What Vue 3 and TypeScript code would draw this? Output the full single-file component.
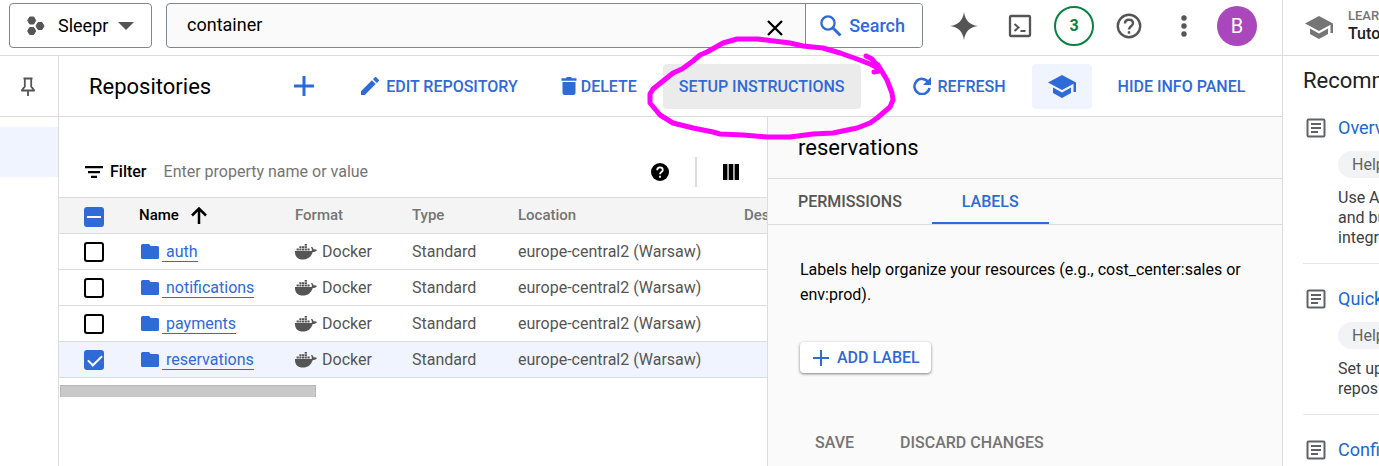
<script setup lang="ts">
import { ref } from 'vue'

interface Repository {
  name: string
  format: string
  type: string
  location: string
  selected: boolean
}

interface Guide {
  title: string
  lines: string[]
}

const query = ref('container')
const filter = ref('')

const repositories = ref<Repository[]>(
  ['auth', 'notifications', 'payments', 'reservations'].map((name) => ({
    name,
    format: 'Docker',
    type: 'Standard',
    location: 'europe-central2 (Warsaw)',
    selected: name === 'reservations',
  })),
)

const guides: Guide[] = [
  { title: 'Overview', lines: ['Use Artifact', 'and build', 'integrations'] },
  { title: 'Quickstart', lines: ['Set up', 'repositories'] },
  { title: 'Configure', lines: [] },
]
</script>

<template>
  <div class="page">
    <div class="console">
      <header class="topbar">
        <button class="project" type="button">
          <svg class="hexes" width="18" height="20" viewBox="0 0 18 20">
            <path d="M2.7 1h4l2 3.500-2 3.500h-4l-2-3.500zM11 6.500h4l2 3.500-2 3.500h-4L9 10zM2.700 11.500h4l2 3.500-2 3.500h-4l-2-3.500z" />
          </svg>
          <span>Sleepr</span>
          <svg width="16" height="8" viewBox="0 0 16 8"><path d="M0 0h16L8 8z" /></svg>
        </button>

        <form class="search" @submit.prevent>
          <input v-model="query" class="query" type="text" aria-label="Search" />
          <button class="clear" type="button" aria-label="Clear search" @click="query = ''">
            <svg width="16" height="16" viewBox="0 0 16 16"><path d="M1 1l14 14M15 1L1 15" fill="none" stroke="#000" stroke-width="2.300" /></svg>
          </button>
          <button class="go" type="submit">
            <svg width="22" height="22" viewBox="0 0 22 22" fill="none" stroke="#2f6ad9">
              <circle cx="8" cy="8" r="6.600" stroke-width="2.300" />
              <path d="M12.800 12.800l7.700 7.700" stroke-width="3" />
            </svg>
            Search
          </button>
        </form>

        <div class="tools">
          <button type="button" aria-label="Assistant">
            <svg width="28" height="28" viewBox="0 0 28 28"><path d="M14 0C15.200 8.500 19.500 12.800 28 14 19.500 15.200 15.200 19.500 14 28 12.800 19.500 8.500 15.200 0 14 8.500 12.800 12.800 8.500 14 0z" /></svg>
          </button>
          <button type="button" aria-label="Cloud Shell">
            <svg width="24" height="24" viewBox="0 0 24 24" fill="none" stroke="#555">
              <rect x="2" y="2" width="20" height="20" rx="1" stroke-width="2.300" />
              <path d="M6.500 10l4 3.500-4 3.500M12.500 17h5" stroke-width="2" />
            </svg>
          </button>
          <button class="count" type="button" aria-label="Notifications">3</button>
          <button type="button" aria-label="Help">
            <svg width="26" height="26" viewBox="0 0 26 26" fill="none" stroke="#555" stroke-width="2.400">
              <circle cx="13" cy="13" r="11.200" />
              <path d="M9 10.500C9 8 10.700 6.700 13 6.700s4 1.400 4 3.500c0 3-4 3.100-4 6.200" />
              <path d="M13 18.200v2.500" />
            </svg>
          </button>
          <button type="button" aria-label="More">
            <svg width="6" height="22" viewBox="0 0 6 22"><circle cx="3" cy="3" r="2.700" /><circle cx="3" cy="11" r="2.700" /><circle cx="3" cy="19" r="2.700" /></svg>
          </button>
          <button class="avatar" type="button" aria-label="Account">B</button>
        </div>
      </header>

      <div class="body">
        <nav class="rail">
          <button class="pin" type="button" aria-label="Pin">
            <svg width="16" height="20" viewBox="0 0 16 20" fill="none" stroke="#555" stroke-width="1.800">
              <path d="M3.500 1.500h9M4.800 1.500v8.200L2 13v.5h12V13l-2.800-3.300V1.500M8 13.500V19" />
            </svg>
          </button>
          <div class="current"></div>
        </nav>

        <div class="workspace">
          <div class="actions">
            <h1>Repositories</h1>
            <button class="create" type="button" aria-label="Create repository">
              <svg width="20" height="20" viewBox="0 0 20 20"><path d="M8.500 0h3v8.500H20v3h-8.500V20h-3v-8.500H0v-3h8.500z" /></svg>
            </button>
            <button class="edit" type="button">
              <svg width="18" height="18" viewBox="0 0 18 18"><path d="M0 14.200V18h3.800L14.700 7.100l-3.800-3.800zM17.700 4.100a1 1 0 000-1.400L15.300.300a1 1 0 00-1.400 0L12 2.200 15.800 6z" /></svg>
              EDIT REPOSITORY
            </button>
            <button class="delete" type="button">
              <svg width="16" height="18" viewBox="0 0 16 18"><path d="M1.500 5h13v11a2 2 0 01-2 2h-9a2 2 0 01-2-2zM.5 1.200h4.300L6 0h4l1.200 1.200h4.300v2.600H.5z" /></svg>
              DELETE
            </button>
            <button class="setup" type="button">SETUP INSTRUCTIONS</button>
            <button class="refresh" type="button">
              <svg width="18" height="18" viewBox="0 0 18 18">
                <path d="M15.200 5A7.600 7.600 0 1016.500 11" fill="none" stroke="#2f6ad9" stroke-width="2.500" />
                <path d="M18 0v8h-8z" />
              </svg>
              REFRESH
            </button>
            <button class="learn-toggle" type="button" aria-label="Learn">
              <svg width="28" height="23" viewBox="0 0 28 23"><path d="M14 0L0 7.500 14 15l11.500-6.200V17H28V7.500zM5 12.600v5.300l9 5.100 9-5.100v-5.300l-9 4.900z" /></svg>
            </button>
            <button class="hide" type="button">HIDE INFO PANEL</button>
          </div>

          <div class="panes">
            <main class="list">
              <div class="filter">
                <label for="filter">
                  <svg width="18" height="12" viewBox="0 0 18 12"><path d="M0 0h18v2.300H0zM3 4.900h12v2.300H3zM6 9.700h6V12H6z" /></svg>
                  <span>Filter</span>
                </label>
                <input id="filter" v-model="filter" type="text" placeholder="Enter property name or value" />
                <button type="button" aria-label="Filter help">
                  <svg width="18" height="18" viewBox="0 0 18 18">
                    <circle cx="9" cy="9" r="9" />
                    <path d="M6.200 7.200c0-1.700 1.200-2.800 2.800-2.800s2.800 1 2.800 2.500c0 2-2.800 2.200-2.800 4.400M9 12.800v2" fill="none" stroke="#fff" stroke-width="1.800" />
                  </svg>
                </button>
                <span class="divider"></span>
                <button type="button" aria-label="Columns">
                  <svg width="16" height="16" viewBox="0 0 16 16"><path d="M0 0h4.400v16H0zM5.700 0h4.600v16H5.700zM11.600 0H16v16h-4.400z" /></svg>
                </button>
              </div>

              <table>
                <colgroup>
                  <col class="c-check" /><col class="c-name" /><col class="c-format" /><col class="c-type" /><col class="c-location" /><col />
                </colgroup>
                <thead>
                  <tr>
                    <th class="pick"><input type="checkbox" aria-label="Select all" class="partial" :indeterminate="true" /></th>
                    <th class="sorted">
                      <span>Name
                        <svg width="16" height="17" viewBox="0 0 16 17"><path d="M8 17V2M1 8.500l7-7 7 7" fill="none" stroke="#000" stroke-width="2.500" /></svg>
                      </span>
                    </th>
                    <th>Format</th>
                    <th>Type</th>
                    <th>Location</th>
                    <th>Description</th>
                  </tr>
                </thead>
                <tbody>
                  <tr v-for="repo in repositories" :key="repo.name" :class="{ selected: repo.selected }">
                    <td class="pick"><input v-model="repo.selected" type="checkbox" :aria-label="'Select ' + repo.name" /></td>
                    <td>
                      <span class="cell">
                        <svg class="folder" width="18" height="15" viewBox="0 0 18 15"><path d="M1.500 0H8l1.500 2h7A1.500 1.500 0 0118 3.500v10a1.500 1.500 0 01-1.500 1.500h-15A1.500 1.500 0 010 13.500v-12A1.500 1.500 0 011.500 0z" /></svg>
                        <a href="#">{{ repo.name }}</a>
                      </span>
                    </td>
                    <td>
                      <span class="cell docker">
                        <svg width="22" height="16" viewBox="0 0 22 16">
                          <path d="M0 7h16.600c.5-1 .2-2.500-.6-3.400l.9-.8c1 .8 1.600 1.700 1.800 2.600 1.100-.2 2.300 0 3.300.5-.8 1.500-2.200 2.100-4.200 2.100C16 13 13 15.500 7.800 15.500 2.500 15.500-.3 12.300 0 7zM1.600 4.500h2.200v2H1.600zM4.300 4.500h2.200v2H4.300zM7 4.500h2.200v2H7zM9.700 4.500h2.200v2H9.700zM12.400 4.500h2.200v2h-2.200zM4.300 2.200h2.200v1.900H4.300zM7 2.200h2.200v1.900H7zM9.700 2.200h2.200v1.900H9.700zM9.700 0h2.200v1.800H9.700z" />
                        </svg>
                        {{ repo.format }}
                      </span>
                    </td>
                    <td>{{ repo.type }}</td>
                    <td>{{ repo.location }}</td>
                    <td></td>
                  </tr>
                </tbody>
              </table>
              <div class="scroll-thumb"></div>
            </main>

            <aside class="info">
              <h2>reservations</h2>
              <div class="tabs" role="tablist">
                <button type="button" role="tab" aria-selected="false">PERMISSIONS</button>
                <button type="button" role="tab" aria-selected="true" class="active">LABELS</button>
              </div>
              <div class="labels">
                <p>Labels help organize your resources (e.g., cost_center:sales or env:prod).</p>
                <button class="add" type="button">
                  <svg width="16" height="16" viewBox="0 0 16 16"><path d="M7 0h2v7h7v2H9v7H7V9H0V7h7z" /></svg>
                  ADD LABEL
                </button>
                <div class="form-actions">
                  <button type="button">SAVE</button>
                  <button type="button">DISCARD CHANGES</button>
                </div>
              </div>
            </aside>
          </div>
        </div>
      </div>
    </div>

    <aside class="learn">
      <header>
        <svg width="28" height="23" viewBox="0 0 28 23"><path d="M14 0L0 7.500 14 15l11.500-6.200V17H28V7.500zM5 12.600v5.300l9 5.100 9-5.100v-5.300l-9 4.900z" /></svg>
        <div>
          <div class="eyebrow">LEARN</div>
          <div class="heading">Tutorial</div>
        </div>
      </header>
      <h2>Recommended</h2>
      <article v-for="guide in guides" :key="guide.title">
        <svg width="20" height="20" viewBox="0 0 20 20" fill="none" stroke="#5f6368" stroke-width="2">
          <rect x="1.500" y="1.500" width="17" height="17" rx="1" />
          <path d="M5 6h10M5 10h10M5 14h7" />
        </svg>
        <div>
          <a href="#">{{ guide.title }}</a>
          <span class="chip">Help document</span>
          <p><span v-for="line in guide.lines" :key="line">{{ line }}</span></p>
        </div>
      </article>
    </aside>

    <svg class="marker" width="260" height="110" viewBox="640 34 260 110">
      <path d="M866 56L872 59 877 65 879 71 874 72M878 68L870 64 857 59 840 53 823 48 803 46 790 43 757 39 737 39 723 43 707 52 700 55 693 61 682 69 673 73 653 89 650 94 650 103 660 115 673 123 693 128 713 132 720 134 743 135 767 137 790 137 813 134 833 133 857 128 870 123 877 118 890 107 893 100 892 93 887 80 878 65" />
    </svg>
  </div>
</template>

<style>
body {
  margin: 0;
  overflow: hidden;
}
</style>

<style scoped>
.page {
  position: relative;
  display: flex;
  height: 100vh;
  overflow: hidden;
  background: #fff;
  color: #000;
  font-family: Roboto, "Liberation Sans", sans-serif;
  font-size: 16px;
}
.page * {
  box-sizing: border-box;
}
button,
input {
  margin: 0;
  padding: 0;
  border: 0;
  background: none;
  color: inherit;
  font: inherit;
}
button {
  display: flex;
  align-items: center;
  flex: none;
  white-space: nowrap;
}
svg {
  display: block;
  flex: none;
}
h1,
h2,
p {
  margin: 0;
  font-weight: 400;
}
a {
  text-decoration: none;
}
.console {
  display: flex;
  flex-direction: column;
  flex: 1;
  min-width: 0;
}

/* Top bar */
.topbar {
  display: flex;
  align-items: center;
  flex: none;
  height: 56px;
  padding: 0 25px 4px 9px;
  border-bottom: 1px solid #dadce0;
}
.project {
  width: 143px;
  height: 45px;
  padding: 0 17px;
  border: 1px solid #80868b;
  border-radius: 4px;
  font-size: 18px;
}
.project span {
  flex: 1;
  padding-left: 13px;
  text-align: left;
}
.project svg,
.tools svg {
  fill: #555;
}
.hexes path {
  stroke: #555;
  stroke-linejoin: round;
}
.tools svg[fill="none"] {
  fill: none;
}
.search {
  display: flex;
  flex: 1;
  height: 45px;
  margin-left: 14px;
  overflow: hidden;
  border: 1px solid #80868b;
  border-radius: 4px;
  background: #fafafa;
}
.query {
  flex: 1;
  min-width: 0;
  padding: 0 0 2px 20px;
  outline: 0;
  font-size: 18px;
}
.clear {
  padding: 4px 22px 0;
}
.go {
  gap: 7px;
  padding: 0 17px 0 14px;
  border-left: 1px solid #80868b;
  background: #fff;
  color: #2f6ad9;
  font-size: 18px;
  font-weight: 500;
}
.tools {
  display: flex;
  align-items: center;
  gap: 22px;
  margin-left: 27px;
}
.tools button:first-child {
  margin-right: 8px;
}
.tools button:nth-child(5) {
  margin: 0 8px 0 17px;
}
.count,
.avatar {
  justify-content: center;
  width: 40px;
  height: 40px;
  border-radius: 50%;
}
.count {
  border: 2px solid #0b8043;
  color: #0b8043;
  font-weight: 700;
}
.avatar {
  background: #ab47bc;
  color: #fff;
  font-size: 20px;
}

/* Side rail */
.body {
  display: flex;
  flex: 1;
  min-height: 0;
}
.rail {
  flex: none;
  width: 59px;
  border-right: 1px solid #dadce0;
}
.pin {
  justify-content: center;
  width: 100%;
  height: 61px;
  padding: 2px 2px 0 0;
  border-bottom: 1px solid #dadce0;
}
.current {
  height: 50px;
  margin-top: 10px;
  background: #f0f4fe;
}

/* Action bar */
.workspace {
  display: flex;
  flex-direction: column;
  flex: 1;
  min-width: 0;
}
.actions {
  display: flex;
  align-items: center;
  flex: none;
  height: 61px;
  padding-left: 30px;
  border-bottom: 1px solid #dadce0;
  color: #2f6ad9;
  font-weight: 500;
}
.actions svg,
.add svg {
  fill: #2f6ad9;
}
h1,
.info h2 {
  color: #000;
  font-size: 22px;
}
.create {
  margin-left: 83px;
}
.edit,
.refresh {
  gap: 7px;
}
.edit {
  margin-left: 47px;
}
.delete {
  gap: 4px;
  margin-left: 43px;
}
.setup {
  height: 45px;
  margin-left: 26px;
  padding: 0 16px;
  border-radius: 4px;
  background: #ebebeb;
}
.refresh {
  margin-left: 52px;
}
.learn-toggle {
  justify-content: center;
  width: 60px;
  height: 45px;
  margin-left: 26px;
  border-radius: 4px;
  background: #f0f4fe;
}
.hide {
  margin-left: 26px;
}

/* Repository list */
.panes {
  display: flex;
  flex: 1;
  min-height: 0;
}
.list {
  flex: 1;
  min-width: 0;
  padding-top: 30px;
  overflow: hidden;
}
.filter {
  display: flex;
  align-items: center;
  height: 50px;
  padding: 0 28px 0 26px;
}
.filter label {
  display: flex;
  align-items: center;
  gap: 7px;
  font-weight: 500;
}
.filter label span,
.filter input {
  padding-bottom: 2px;
}
.filter input {
  flex: 1;
  min-width: 0;
  margin-left: 17px;
  outline: 0;
}
.filter input::placeholder {
  color: #757575;
  opacity: 1;
}
.divider {
  width: 2px;
  height: 30px;
  margin: 0 26px;
  background: #dadce0;
}
table {
  width: 100%;
  border-collapse: separate;
  border-spacing: 0;
  table-layout: fixed;
  color: #555;
}
.c-check {
  width: 80px;
}
.c-name {
  width: 156px;
}
.c-format {
  width: 117px;
}
.c-type {
  width: 106px;
}
.c-location {
  width: 226px;
}
th,
td {
  height: 36px;
  padding: 0;
  overflow: hidden;
  border-bottom: 1px solid #dadce0;
  text-align: left;
  white-space: nowrap;
}
th {
  height: 37px;
  padding-bottom: 2px;
  border-top: 1px solid #dadce0;
  background: #f4f4f4;
  color: #757575;
  font-size: 15px;
  font-weight: 500;
}
.sorted {
  color: #000;
}
.sorted span {
  display: flex;
  align-items: center;
  gap: 12px;
}
.sorted svg {
  margin-top: 2px;
}
.pick {
  padding: 1px 0 0 25px;
}
th.pick {
  padding-top: 2px;
}
.pick input {
  display: block;
  width: 20px;
  height: 20px;
  appearance: none;
  border: 2px solid #000;
  border-radius: 3px;
  background: #fff;
}
.pick input:checked,
.pick .partial {
  border-color: #2f6ad9;
  background: #2f6ad9;
}
.pick .partial::after {
  content: "";
  display: block;
  width: 14px;
  height: 2px;
  margin: 7px 1px;
  background: #fff;
}
.pick input:checked:not(.partial)::after {
  content: "";
  display: block;
  width: 12px;
  height: 6px;
  margin: 3px 2px;
  border: solid #fff;
  border-width: 0 0 2px 2px;
  transform: rotate(-45deg);
}
.selected td {
  background: #f0f4fe;
}
.cell {
  display: flex;
  align-items: center;
}
.folder {
  margin: 0 2px;
  fill: #2f6ad9;
}
.cell a {
  margin-left: 1px;
  padding-left: 4px;
  border-bottom: 1px solid #2f6ad9;
  color: #2f6ad9;
}
.docker {
  gap: 5px;
}
.docker svg {
  fill: #555;
}
.scroll-thumb {
  width: 256px;
  height: 12px;
  margin: 7px 1px;
  border: 1px solid #b8b8b8;
  border-bottom: 0;
  background: #c9c9c9;
}

/* Info panel */
.info {
  flex: none;
  width: 515px;
  border-left: 1px solid #dadce0;
  background: #fafafa;
}
.info h2 {
  height: 62px;
  padding-left: 30px;
  border-bottom: 1px solid #dadce0;
  line-height: 61px;
}
.tabs {
  display: flex;
  height: 46px;
  border-bottom: 1px solid #dadce0;
  color: #555;
  font-weight: 500;
}
.tabs button {
  padding: 0 30px;
}
.tabs .active {
  padding-top: 2px;
  border-bottom: 2px solid #2f6ad9;
  color: #2f6ad9;
}
.labels {
  padding: 32px 32px 0;
}
.labels p {
  line-height: 25px;
}
.add {
  gap: 8px;
  height: 31px;
  margin-top: 35px;
  padding: 0 11px 0 13px;
  border-radius: 4px;
  background: #fff;
  box-shadow: 0 1px 3px rgba(0, 0, 0, 0.5);
  color: #2f6ad9;
  font-weight: 500;
}
.form-actions {
  display: flex;
  gap: 46px;
  margin-top: 58px;
  padding-left: 15px;
  color: #757575;
  font-weight: 500;
  line-height: 24px;
}

/* Learning panel */
.learn {
  flex: none;
  width: 97px;
  overflow: hidden;
  border-left: 1px solid #dadce0;
  color: #3c4043;
  white-space: nowrap;
}
.learn header {
  display: flex;
  align-items: center;
  gap: 15px;
  height: 56px;
  padding-left: 22px;
  border-bottom: 1px solid #dadce0;
}
.learn header svg {
  fill: #757575;
}
.learn header div {
  line-height: 18px;
}
.learn header > div {
  padding-bottom: 6px;
}
.eyebrow {
  color: #757575;
  font-size: 13px;
  font-weight: 500;
}
.heading {
  color: #202124;
  font-weight: 500;
}
.learn h2 {
  padding: 13px 0 0 20px;
  color: #202124;
  font-size: 22px;
  line-height: 24px;
}
article {
  display: flex;
  gap: 12px;
  margin-left: 20px;
  padding: 23px 0 15px 3px;
  border-bottom: 1px solid #e4e6e9;
}
article > svg {
  margin-top: 2px;
}
article a {
  display: block;
  color: #1967d2;
  font-size: 18px;
  line-height: 24px;
}
.chip {
  display: block;
  width: 130px;
  margin: 11px 0 10px;
  padding-left: 14px;
  border-radius: 14px;
  background: #f1f3f4;
  color: #5f6368;
  font-size: 16px;
  line-height: 27px;
}
article p {
  font-size: 16px;
  line-height: 20px;
}
article p span {
  display: block;
}

/* Hand-drawn highlight around the setup button */
.marker {
  position: absolute;
  top: 34px;
  left: 640px;
  pointer-events: none;
}
.marker path {
  fill: none;
  stroke: #f0f;
  stroke-width: 5;
  stroke-linecap: round;
  stroke-linejoin: round;
}
</style>
